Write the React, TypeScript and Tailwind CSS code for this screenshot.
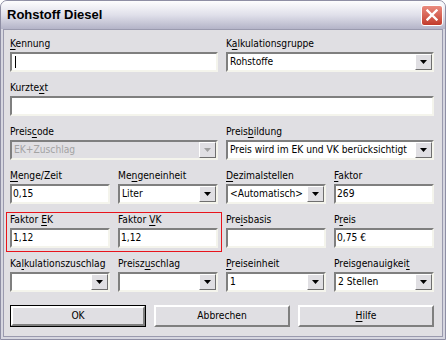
import React from 'react';

const FONT = { fontFamily: '"DejaVu Sans Condensed", "DejaVu Sans", sans-serif' };

function Label({ text, u }: { text: string; u: number }) {
  return (
    <div className="h-[13px] mb-[2px] leading-[13px] text-[10.2px] text-black whitespace-nowrap">
      {text.slice(0, u)}
      <span className="underline underline-offset-[2px]">{text[u]}</span>
      {text.slice(u + 1)}
    </div>
  );
}

const sunken =
  'h-[20px] border-2 border-t-[#7f7f7f] border-l-[#7f7f7f] border-b-[#f4f4ec] border-r-[#f4f4ec]';

function TextBox({ value = '', caret = false }: { value?: string; caret?: boolean }) {
  return (
    <div className={`${sunken} bg-white flex items-center px-[1px] text-[10.2px] leading-none`}>
      {caret && <div className="w-px h-[12px] bg-black ml-[2px]" />}
      {value}
    </div>
  );
}

function Arrow({ disabled = false }: { disabled?: boolean }) {
  return (
    <div className="w-[17px] h-[16px] bg-[#e0dfe3] border border-t-white border-l-white border-b-[#6f6f6f] border-r-[#6f6f6f] flex items-center justify-center shrink-0">
      <svg width="7" height="4" viewBox="0 0 7 4">
        <path d="M0 0h7L3.5 4z" fill={disabled ? '#a0a0a0' : '#000'} />
      </svg>
    </div>
  );
}

function Combo({ value = '', disabled = false }: { value?: string; disabled?: boolean }) {
  return (
    <div
      className={`${sunken} ${disabled ? 'bg-[#e0dfe3] text-[#a3a3a3]' : 'bg-white text-black'} flex items-center pl-[2px] text-[10.2px] leading-none`}
    >
      <div className="flex-1 whitespace-nowrap overflow-hidden">{value}</div>
      <Arrow disabled={disabled} />
    </div>
  );
}

function Field({ label, u, span = 1, children }: { label: string; u: number; span?: number; children: React.ReactNode }) {
  return (
    <div className={span === 4 ? 'col-span-4' : span === 2 ? 'col-span-2' : ''}>
      <Label text={label} u={u} />
      {children}
    </div>
  );
}

function Btn({ children, def = false }: { children: React.ReactNode; def?: boolean }) {
  return (
    <div className={`h-[22px] ${def ? 'border border-black' : ''}`}>
      <div className="h-full bg-[#e0dfe3] border-2 border-t-white border-l-white border-b-[#7f7f7f] border-r-[#7f7f7f] flex items-center justify-center text-[10.2px]">
        {children}
      </div>
    </div>
  );
}

export default function App() {
  return (
    <div className="w-[446px] h-[340px] bg-white" style={FONT}>
      <div className="w-full h-full flex flex-col rounded-t-[7px] border border-[#8e8ea4] bg-[#d6d6e0] overflow-hidden">
        <div className="h-[28px] shrink-0 flex items-center justify-between pl-[6px] pr-[2px] bg-gradient-to-b from-[#fdfdfe] via-[#e0e0ea] to-[#b4b4c8]">
          <span className="text-[13px] font-bold text-black" style={{ fontFamily: '"Liberation Sans", sans-serif' }}>
            Rohstoff Diesel
          </span>
          <div className="w-[22px] h-[21px] rounded-[3px] border border-white bg-gradient-to-b from-[#e98a7e] to-[#c23a2b] flex items-center justify-center">
            <svg width="12" height="12" viewBox="0 0 12 12">
              <path d="M1.5 1.5l9 9M10.5 1.5l-9 9" stroke="#fff" strokeWidth="2.4" strokeLinecap="square" />
            </svg>
          </div>
        </div>
        <div className="flex-1 mx-[2px] mb-[2px] border border-[#9a9aae] bg-[#e0dfe3] px-[6px] pt-[7px]">
          <div className="grid grid-cols-4 gap-x-2 gap-y-[9px] w-[424px]">
            <Field label="Kennung" u={0} span={2}>
              <TextBox caret />
            </Field>
            <Field label="Kalkulationsgruppe" u={1} span={2}>
              <Combo value="Rohstoffe" />
            </Field>
            <Field label="Kurztext" u={6} span={4}>
              <TextBox />
            </Field>
            <Field label="Preiscode" u={5} span={2}>
              <Combo value="EK+Zuschlag" disabled />
            </Field>
            <Field label="Preisbildung" u={5} span={2}>
              <Combo value="Preis wird im EK und VK berücksichtigt" />
            </Field>
            <Field label="Menge/Zeit" u={0}>
              <TextBox value="0,15" />
            </Field>
            <Field label="Mengeneinheit" u={2}>
              <Combo value="Liter" />
            </Field>
            <Field label="Dezimalstellen" u={0}>
              <Combo value="<Automatisch>" />
            </Field>
            <Field label="Faktor" u={0}>
              <TextBox value="269" />
            </Field>
            <div className="col-span-2 relative grid grid-cols-2 gap-x-2">
              <div className="absolute left-[-4px] right-[-4px] top-[-1px] bottom-[-4px] border border-[#e8141c]" />
              <Field label="Faktor EK" u={7}>
                <TextBox value="1,12" />
              </Field>
              <Field label="Faktor VK" u={7}>
                <TextBox value="1,12" />
              </Field>
            </div>
            <Field label="Preisbasis" u={3}>
              <TextBox />
            </Field>
            <Field label="Preis" u={1}>
              <TextBox value="0,75 €" />
            </Field>
            <Field label="Kalkulationszuschlag" u={2}>
              <Combo />
            </Field>
            <Field label="Preiszuschlag" u={6}>
              <Combo />
            </Field>
            <Field label="Preiseinheit" u={0}>
              <Combo value="1" />
            </Field>
            <Field label="Preisgenauigkeit" u={15}>
              <Combo value="2 Stellen" />
            </Field>
          </div>
          <div className="grid grid-cols-3 gap-x-2 w-[424px] mt-[13px]">
            <Btn def>OK</Btn>
            <Btn>Abbrechen</Btn>
            <Btn>
              <span className="underline underline-offset-[2px]">H</span>ilfe
            </Btn>
          </div>
        </div>
      </div>
    </div>
  );
}
